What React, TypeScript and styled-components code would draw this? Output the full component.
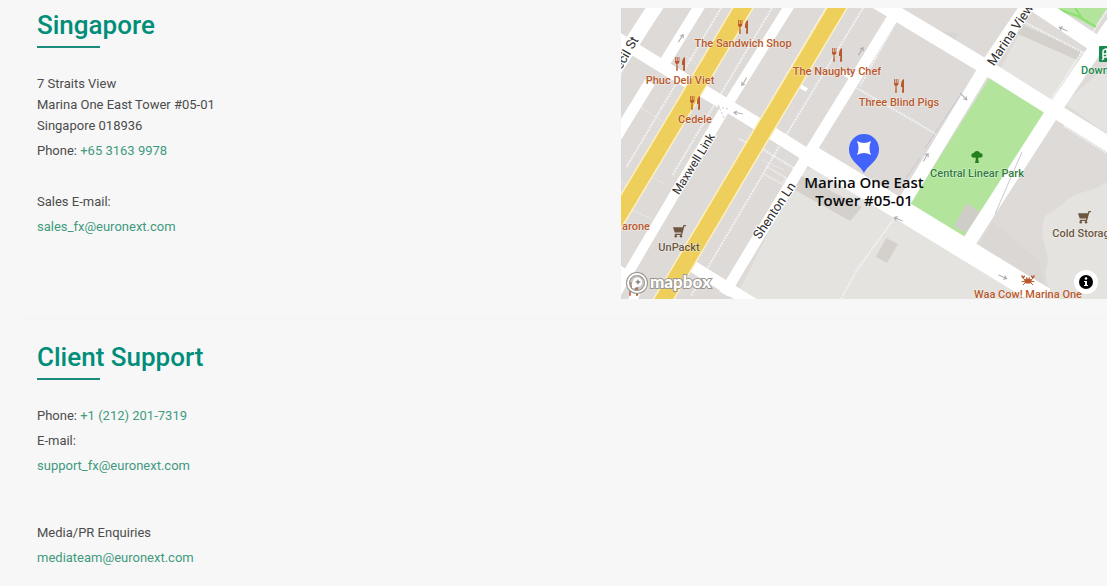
import React from "react";
import styled, { createGlobalStyle } from "styled-components";

const Global = createGlobalStyle`
  * { box-sizing: border-box; }
  body {
    margin: 0;
    background: #f7f7f7;
    color: #4c4c4c;
    font-family: Roboto, "Liberation Sans", sans-serif;
  }
`;

const Page = styled.main`
  padding: 8px 0 16px 24px;
`;

const Office = styled.section`
  display: grid;
  grid-template-columns: minmax(0, 597fr) minmax(0, 486fr);
  padding-bottom: 19px;
  border-bottom: 1px solid #f4f4f4;
`;

const Support = styled.section`
  padding-top: 21px;
`;

const Details = styled.div`
  padding-left: 13px;
  font-size: 13px;
  line-height: 21px;
`;

const Title = styled.h2`
  margin: 0 0 25px;
  color: #008d7a;
  font-size: 26px;
  line-height: 34px;
  font-weight: 500;

  &::after {
    content: "";
    display: block;
    width: 63px;
    height: 2px;
    margin-top: 4px;
    background: #1b8c7b;
  }
`;

const Address = styled.address`
  font-style: normal;
`;

const Line = styled.p<{ $gap?: number }>`
  margin: ${(p) => p.$gap ?? 4}px 0 0;
`;

const Link = styled.a`
  color: #3f9a80;
  text-decoration: none;
`;

const MapFrame = styled.div`
  position: relative;
  height: 291px;
  overflow: hidden;
  background: #dddad7;
`;

const MapSvg = styled.svg`
  display: block;
  width: 100%;
  height: 100%;
`;

const Label = styled.text`
  font-size: 11px;
  font-weight: 500;
  text-anchor: middle;
  paint-order: stroke;
  stroke: #ffffff;
  stroke-opacity: 0.6;
  stroke-width: 1px;
`;

const StreetLabel = styled.text<{ $size?: number }>`
  font-size: ${(p) => p.$size ?? 13}px;
  fill: #2e2e2e;
  text-anchor: middle;
  paint-order: stroke;
  stroke: #ffffff;
  stroke-width: 2px;
`;

const PinLabel = styled.text`
  font-family: "Open Sans", "Noto Sans", sans-serif;
  font-size: 15px;
  font-weight: 600;
  fill: #0b0b0b;
  text-anchor: middle;
`;

const MapboxLink = styled.a`
  position: absolute;
  left: 5px;
  bottom: 4px;
  width: 90px;
  height: 24px;
`;

const MapboxWord = styled.text`
  font-family: Lato, sans-serif;
  font-size: 17px;
  font-weight: 900;
  fill: #ffffff;
  paint-order: stroke;
  stroke: #99968f;
  stroke-width: 2px;
`;

const InfoButton = styled.button`
  position: absolute;
  right: 9px;
  bottom: 5px;
  width: 24px;
  height: 24px;
  padding: 0;
  border: 0;
  border-radius: 12px;
  background: #ffffff;
  cursor: pointer;

  svg {
    display: block;
    margin: auto;
  }
`;

const ORANGE = "#b9592b";
const GREEN = "#2f7b3c";
const BROWN = "#6d5740";

const Fork = () => (
  <g>
    <path d="M-5-7v5q0 1.600 1.500 2l-.3 6.200q.8 1.400 1.600 0L-2.500 0Q-.6-.4-.6-2v-5h-.8v4h-.9v-4h-1v4h-.9v-4z" />
    <path d="M5-7Q2.200-6 2-1v2h1.300l-.3 5.200q1 1.400 2 0z" />
  </g>
);

const Cart = () => (
  <g>
    <path d="M7-6H4.500L3.700-3.700H-6L-4.300 1.600H2.300L2 2.700H-4.200v1.200H3L5.400-4.800H7z" />
    <circle cx="-3.200" cy="5.200" r="1.300" />
    <circle cx="2" cy="5.200" r="1.300" />
  </g>
);

const Tree = () => (
  <path
    fill="#23801d"
    d="M0-6c2 0 2.800 1 3 2 1.700 0 3 1.300 2.600 3C5.300.7 3 1 1.700.3L1.200 2.200 2 6h-4l.8-3.800L-1.700.3C-3 1-5.300.7-5.600-1-6-2.700-4.700-4-3-4c.2-1 1-2 3-2z"
  />
);

const Crab = () => (
  <g>
    <ellipse cx="0" cy="1" rx="3.800" ry="2.600" />
    <path
      d="M-3 0L-5.200-2M3 0L5.200-2M-3.500 1.500H-6.300M3.500 1.500H6.300M-3 3L-5 5M3 3L5 5M-1.300-1V-2.800M1.300-1V-2.800"
      stroke="currentColor"
      strokeWidth="1"
      fill="none"
    />
    <path d="M-6.500-5.500v2.500l1.800 1.700L-3-3.200-3.600-5l-1 1.600zM6.500-5.500v2.500L4.700-1.300 3-3.200 3.600-5l1 1.600z" />
  </g>
);

type PoiProps = {
  x: number;
  y: number;
  label?: string;
  color: string;
  labelY?: number;
  children?: React.ReactNode;
};

const Poi = ({ x, y, label, color, labelY = 20, children }: PoiProps) => (
  <g transform={`translate(${x} ${y})`} fill={color} color={color}>
    {children}
    {label && (
      <Label x={0} y={labelY}>
        {label}
      </Label>
    )}
  </g>
);

const Arrow = ({ x, y, turn }: { x: number; y: number; turn: number }) => (
  <path
    transform={`translate(${x} ${y}) rotate(${turn})`}
    d="M-5 0H4M1-2L4 0L1 2"
    stroke="#a9a9ad"
    strokeWidth="1"
    fill="none"
  />
);

const OfficeMap = () => (
  <MapSvg viewBox="621 8 486 291" preserveAspectRatio="xMidYMid slice" role="img" aria-label="Map of Marina One East Tower">
    <rect x="621" y="8" width="486" height="291" fill="#dddad7" />

    {/* plots */}
    <g fill="#e4e3df">
      <path d="M800 170L822 168L960 254L1034 299H735z" />
      <path d="M1023 26L1083 52L1050 105L998 73z" />
      <path d="M1107 66L1064 103L1107 134z" />
      <path d="M1107 182L1092 190Q1070 194 1062 205L1045 216Q1039 230 1046 250Q1050 262 1045 272L1050 299H1107z" />
    </g>
    <g fill="#d4d1cd">
      <path d="M800 175L862 207L850 221L795 190z" />
      <path d="M886 238L898 244L887 263L876 257z" />
      <path d="M1022 25L1082 51L1077 60L1018 34z" />
      <path d="M909 24L959 34L953 42L902 25z" opacity="0.5" />
      <path d="M993 222L1040 262L1043 290L975 252z" opacity="0.25" />
    </g>
    <g fill="none" stroke="#e9e7e4" strokeWidth="1">
      <path d="M640 107L662 121M621 180L632 190M685 55L697 65M632 210L652 219M647 175L665 184M700 60L718 70M762 160L784 170" />
      <path d="M766 166L786 178L782 184L764 174" strokeWidth="2" />
    </g>

    {/* footpaths */}
    <g fill="none" stroke="#f2f2f5" strokeWidth="2" strokeDasharray="2 1">
      <path d="M721 8L626 168M772 8L672 176M826 8L664 285M863 8L779 147L691 296" />
      <path d="M739 139L764 150L800 172M857 88L936 134" />
      <path d="M1082 52L1047 106M1064 126L1107 153M857 270L893 220M841 299L857 270" />
      <path d="M1107 10L1086 43M1024 22L1084 53M896 22L860 86" />
    </g>

    {/* parks */}
    <path d="M990 77L1044 112L966 240L909 206z" fill="#b2e59b" />
    <path d="M967 203L980 212L966 233L954 226z" fill="#cfcdc7" />
    <path d="M1055 8H1107L1094 28L1080 20z" fill="#b2e59b" />
    <path d="M1060 10L1078 16L1096 27M1075 8L1082 18" stroke="#8be06f" strokeWidth="2" fill="none" />

    {/* side streets */}
    <g fill="none" stroke="#ffffff">
      <path d="M657 4L615 69" strokeWidth="15" />
      <path d="M702 2L665 62M650 82L615 139" strokeWidth="11" />
      <path d="M793 0L723 112L617 292" strokeWidth="10" />
      <path d="M896 12L853 82L806 158L724 294" strokeWidth="11" />
      <path d="M1035 -6L984 70L903 204" strokeWidth="13" />
      <path d="M1112 24L1054 110L960 256" strokeWidth="14" />
      <path d="M613 36L660 65L743 115L783 140L845 179" strokeWidth="13" />
      <path d="M810 155L870 191L1045 298" strokeWidth="21" />
      <path d="M864 -6L984 66L1054 110L1115 148" strokeWidth="15" />
      <path d="M1027 -2L1090 40L1115 55" strokeWidth="17" />
      <path d="M684 261L755 305" strokeWidth="12" />
      <path d="M616 268L640 283L632 302" strokeWidth="9" />
      <path d="M842 72L856 81M800 86L807 90" strokeWidth="4" />
    </g>
    <g fill="none" stroke="#c9c8ce" strokeWidth="1">
      <path d="M925 148L961 94M920 158L906 178M1022 152L995 214" />
      <path d="M718 105L724 118M718 107L729 109M750 128L764 140" strokeDasharray="2 2" />
    </g>

    {/* main roads */}
    <g fill="none">
      <path d="M750 -4L655 155L614 223M844 -4L752 150L659 307" stroke="#fbf0c4" strokeWidth="19" />
      <path d="M750 -4L655 155L614 223M844 -4L752 150L659 307" stroke="#efcf5c" strokeWidth="16" />
    </g>

    <Arrow x={681} y={38} turn={-58} />
    <Arrow x={744} y={82} turn={122} />
    <Arrow x={738} y={113} turn={190} />
    <Arrow x={861} y={51} turn={-58} />
    <Arrow x={964} y={97} turn={45} />
    <Arrow x={1063} y={29} turn={205} />
    <Arrow x={898} y={219} turn={205} />
    <Arrow x={1003} y={277} turn={25} />
    <Arrow x={926} y={157} turn={-58} />

    <StreetLabel transform="translate(630 55) rotate(-60)">ecil St</StreetLabel>
    <StreetLabel $size={12} transform="translate(697 166) rotate(-58)">Maxwell Link</StreetLabel>
    <StreetLabel transform="translate(778 213) rotate(-56)">Shenton Ln</StreetLabel>
    <StreetLabel transform="translate(1014 37) rotate(-56)">Marina View</StreetLabel>

    <Poi x={743} y={27} label="The Sandwich Shop" color={ORANGE}><Fork /></Poi>
    <Poi x={680} y={64} label="Phuc Deli Viet" color={ORANGE}><Fork /></Poi>
    <Poi x={695} y={103} label="Cedele" color={ORANGE}><Fork /></Poi>
    <Poi x={837} y={55} label="The Naughty Chef" color={ORANGE}><Fork /></Poi>
    <Poi x={899} y={86} label="Three Blind Pigs" color={ORANGE}><Fork /></Poi>
    <Poi x={633} y={289} color={ORANGE}><Fork /></Poi>
    <Poi x={636} y={210} label="arone" color={ORANGE} />
    <Poi x={679} y={231} label="UnPackt" color={BROWN}><Cart /></Poi>
    <Poi x={1084} y={217} label="Cold Storage" color={BROWN}><Cart /></Poi>
    <Poi x={977} y={157} label="Central Linear Park" color={GREEN}><Tree /></Poi>
    <Poi x={1028} y={280} label="Waa Cow! Marina One" color={ORANGE} labelY={18}><Crab /></Poi>

    <g transform="translate(1099 46)">
      <rect width="14" height="16" rx="1" fill="#178a4c" />
      <path d="M4 11V6q0-3 4-3v8zM4 8h6M3 14l2-2" stroke="#ffffff" strokeWidth="1.500" fill="none" />
    </g>
    <Label x="1107" y="74" fill="#178a4c">Downtown</Label>

    <path d="M864 173C860 165 849 161 849 149a15 15 0 0 1 30 0C879 161 868 165 864 173z" fill="#4264fb" />
    <path d="M857 141q7 4 14 0q-3 7 0 14q-7-4-14 0q3-7 0-14z" fill="#ffffff" />
    <PinLabel x="864" y="188">Marina One East</PinLabel>
    <PinLabel x="864" y="206">Tower #05-01</PinLabel>
  </MapSvg>
);

const ContactLink = ({ kind, value }: { kind: "tel" | "mailto"; value: string }) => (
  <Link href={`${kind}:${kind === "tel" ? value.replace(/[^+\d]/g, "") : value}`}>{value}</Link>
);

export default function App() {
  return (
    <>
      <Global />
      <Page>
        <Office>
          <Details>
            <Title>Singapore</Title>
            <Address>
              7 Straits View
              <br />
              Marina One East Tower #05-01
              <br />
              Singapore 018936
            </Address>
            <Line>
              Phone: <ContactLink kind="tel" value="+65 3163 9978" />
            </Line>
            <Line $gap={30}>Sales E-mail:</Line>
            <Line>
              <ContactLink kind="mailto" value="sales_fx@euronext.com" />
            </Line>
          </Details>
          <MapFrame>
            <OfficeMap />
            <MapboxLink href="#mapbox" aria-label="Mapbox">
              <svg width="90" height="24" viewBox="0 0 90 24">
                <circle cx="11" cy="12" r="9" fill="none" stroke="#99968f" strokeWidth="4" />
                <circle cx="11" cy="12" r="9" fill="#99948d" fillOpacity="0.5" stroke="#ffffff" strokeWidth="2" />
                <path d="M6 17q-1-10 5.500-10.500a4.600 4.600 0 0 1 0 9.500q-3 1.500-5.500 1z" fill="#ffffff" />
                <path d="M12 8l1 2 2 1-2 1-1 2-1-2-2-1 2-1z" fill="#8b8986" />
                <MapboxWord x="24" y="17">mapbox</MapboxWord>
              </svg>
            </MapboxLink>
            <InfoButton type="button" aria-label="Map attribution">
              <svg width="14" height="14" viewBox="0 0 14 14">
                <circle cx="7" cy="7" r="7" fill="#000000" />
                <circle cx="7" cy="3.500" r="1.300" fill="#ffffff" />
                <path d="M5 6h3v4h1v1H5v-1h1V7H5z" fill="#ffffff" />
              </svg>
            </InfoButton>
          </MapFrame>
        </Office>
        <Support>
          <Details>
            <Title>Client Support</Title>
            <Line $gap={0}>
              Phone: <ContactLink kind="tel" value="+1 (212) 201-7319" />
            </Line>
            <Line>E-mail:</Line>
            <Line>
              <ContactLink kind="mailto" value="support_fx@euronext.com" />
            </Line>
            <Line $gap={46}>Media/PR Enquiries</Line>
            <Line>
              <ContactLink kind="mailto" value="mediateam@euronext.com" />
            </Line>
          </Details>
        </Support>
      </Page>
    </>
  );
}
